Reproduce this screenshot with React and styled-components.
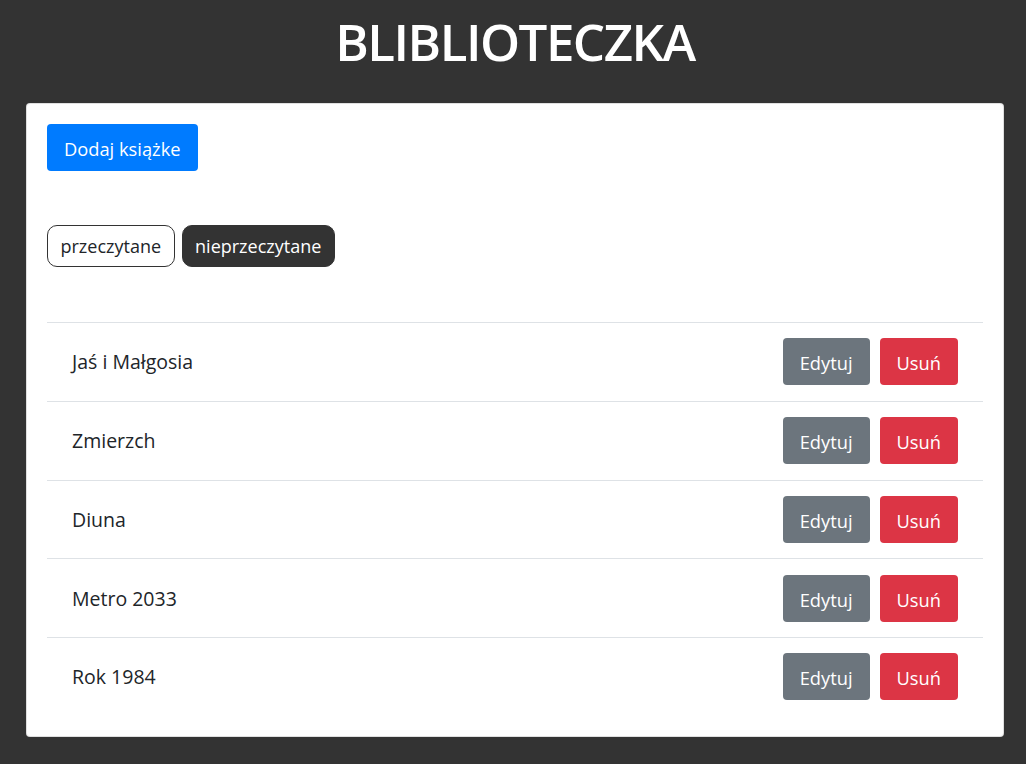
import React from "react";
import styled, { createGlobalStyle } from "styled-components";

const Global = createGlobalStyle`
  * { box-sizing: border-box; }
  html, body { margin: 0; padding: 0; background: #333333; }
  body { font-family: "Open Sans", "Noto Sans", "Liberation Sans", sans-serif; color: #212529; }
`;

const Page = styled.div`
  min-height: 764px;
  background: #333333;
  padding: 0 22px 27px 26px;
  display: flex;
  flex-direction: column;
`;

const Title = styled.h1`
  margin: 0;
  height: 103px;
  display: flex;
  align-items: center;
  justify-content: center;
  color: #ffffff;
  font-size: 51px;
  font-weight: 600;
  letter-spacing: -1.5px;
  padding-bottom: 21px;
`;

const Card = styled.div`
  background: #ffffff;
  border: 1px solid rgba(0, 0, 0, 0.125);
  border-radius: 4px;
  padding: 20px;
  display: flex;
  flex-direction: column;
`;

const Btn = styled.button`
  font-family: inherit;
  font-size: 18.3px;
  line-height: 27px;
  padding: 10px 16px;
  height: 47px;
  border-radius: 4px;
  border: 1px solid transparent;
  color: #ffffff;
  background: ${(p) => p.$bg};
  cursor: pointer;
`;

const TopRow = styled.div`
  display: flex;
`;

const Filters = styled.div`
  display: flex;
  gap: 7px;
  margin-top: 54px;
`;

const Pill = styled.button`
  font-family: inherit;
  font-size: 18px;
  height: 42px;
  padding: 0 12.5px;
  border-radius: 10px;
  border: 1px solid #333333;
  background: ${(p) => (p.$active ? "#333333" : "#ffffff")};
  color: ${(p) => (p.$active ? "#ffffff" : "#212529")};
  cursor: pointer;
`;

const List = styled.ul`
  list-style: none;
  margin: 55px 0 0;
  padding: 0;
`;

const Row = styled.li`
  display: flex;
  align-items: center;
  justify-content: space-between;
  border-top: 1px solid #dee2e6;
  height: 78.75px;
  padding: 0 25px;
  font-size: 19.5px;
`;

const Actions = styled.div`
  display: flex;
  gap: 10px;
`;

const books = ["Jaś i Małgosia", "Zmierzch", "Diuna", "Metro 2033", "Rok 1984"];

export default function App() {
  return (
    <>
      <Global />
      <Page>
        <Title>BLIBLIOTECZKA</Title>
        <Card>
          <TopRow>
            <Btn $bg="#007bff">Dodaj książke</Btn>
          </TopRow>
          <Filters>
            <Pill>przeczytane</Pill>
            <Pill $active>nieprzeczytane</Pill>
          </Filters>
          <List>
            {books.map((b) => (
              <Row key={b}>
                <span>{b}</span>
                <Actions>
                  <Btn $bg="#6c757d">Edytuj</Btn>
                  <Btn $bg="#dc3545">Usuń</Btn>
                </Actions>
              </Row>
            ))}
          </List>
        </Card>
      </Page>
    </>
  );
}
